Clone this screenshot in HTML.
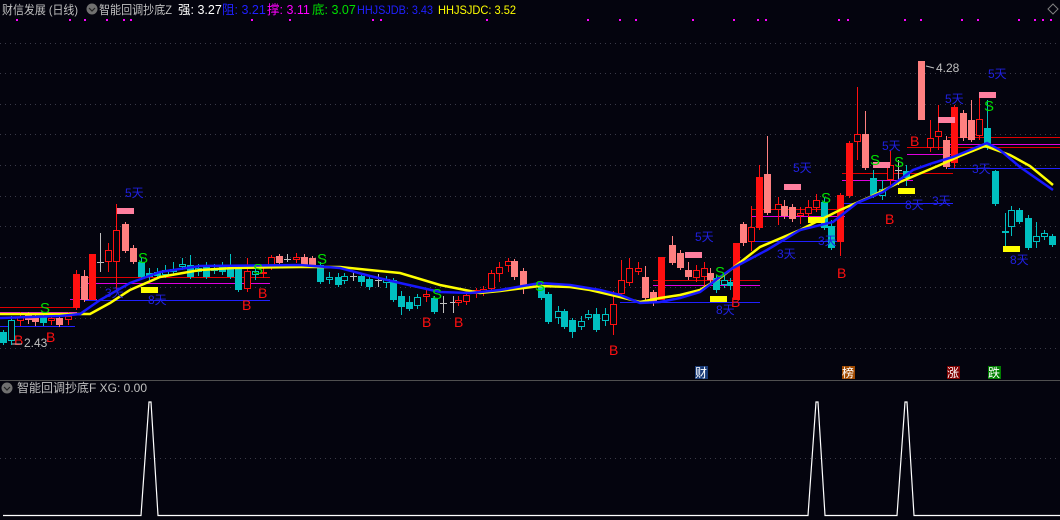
<!DOCTYPE html>
<html><head><meta charset="utf-8"><style>
html,body{margin:0;padding:0;background:#04040e;width:1060px;height:520px;overflow:hidden}
svg{display:block}
text{font-family:"Liberation Sans","Noto Sans CJK SC",sans-serif}
</style></head><body>
<svg id="s" width="1060" height="520" xmlns="http://www.w3.org/2000/svg"></svg>
<script>
var o='';
function L(x1,y1,x2,y2,c,w,d){o+='<line x1="'+x1+'" y1="'+y1+'" x2="'+x2+'" y2="'+y2+'" stroke="'+c+'" stroke-width="'+(w||1)+'"'+(d?' stroke-dasharray="'+d+'"':'')+'/>';}
function R(x,y,w,h,c){o+='<rect x="'+x+'" y="'+y+'" width="'+w+'" height="'+h+'" fill="'+c+'"/>';}
function T(x,y,t,c,s,tl){o+='<text x="'+x+'" y="'+y+'" fill="'+c+'" font-size="'+(s||12)+'"'+(tl?' textLength="'+tl+'" lengthAdjust="spacingAndGlyphs"':'')+'>'+t+'</text>';}
[43,73,104,134,165,196,226,257,287,318,348].forEach(function(y){L(0,y+.5,1060,y+.5,'#3a3a48',1,'1 4');});
L(0,458.5,1060,458.5,'#3a3a48',1,'1 4');
var H=[[0,77,307,'#e00000'],[0,77,312,'#e000e0'],[0,75,326,'#2020ff'],[70,97,299,'#e000e0'],[85,270,277,'#e00000'],[85,270,283,'#e000e0'],[85,270,300,'#2020ff'],
[653,760,280,'#e00000'],[653,760,285,'#e000e0'],[620,760,302,'#2020ff'],[752,845,209,'#e00000'],[752,845,216,'#e000e0'],[752,840,241,'#2020ff'],
[842,953,173,'#e00000'],[842,913,180,'#e000e0'],[842,953,203,'#2020ff'],[907,1060,147,'#e00000'],[907,953,154,'#e000e0'],[948,1060,137,'#e00000'],[948,1060,144,'#e000e0'],[948,1060,168,'#2020ff']];
H.forEach(function(h){L(h[0],h[2]+.5,h[1],h[2]+.5,h[3]);});
var C=[[0,332,343,330,345,'c'],[8,320,341,316,345,'h'],[17,317,321,312,326,'r'],[25,314,320,312,324,'p'],[32,316,322,314,326,'p'],[40,316,323,314,326,'c'],[48,318,321,315,325,'r'],[56,318,325,316,327,'p'],[65,316,320,312,325,'r'],
[73,274,308,270,310,'R'],[81,276,300,270,302,'p'],[89,254,300,254,300,'R'],[97,262,263,233,272,'w'],[105,250,262,243,272,'r'],[113,230,262,204,290,'r'],[122,224,251,222,253,'p'],[130,248,262,245,264,'p'],[138,262,277,258,280,'c'],
[146,273,277,268,280,'c'],[154,272,276,268,279,'c'],[162,270,275,265,278,'h'],[170,269,272,262,276,'c'],[179,264,267,258,270,'h'],[187,265,277,255,279,'c'],[195,268,272,264,276,'h'],[203,265,277,262,279,'c'],[211,268,271,264,274,'h'],[219,266,272,262,275,'c'],[227,268,277,254,279,'c'],[235,268,290,265,292,'c'],
[244,271,289,258,292,'r'],[252,271,275,268,280,'h'],[260,272,274,266,278,'r'],[268,257,268,255,270,'r'],[276,256,263,254,265,'p'],[284,259,260,254,262,'w'],[293,257,260,253,263,'r'],[301,257,265,254,267,'p'],[309,258,265,256,268,'p'],[317,265,282,262,284,'c'],
[326,277,280,272,284,'h'],[335,277,285,273,287,'c'],[341,276,281,273,284,'h'],[350,276,278,272,281,'w'],[358,276,282,274,286,'c'],[366,279,287,276,290,'c'],[375,280,281,274,287,'w'],[383,279,283,276,288,'h'],[390,280,300,278,302,'c'],[398,296,307,291,315,'c'],[406,302,309,296,311,'c'],[414,297,306,294,309,'h'],[423,294,297,290,302,'r'],[431,298,312,296,314,'c'],[440,303,304,296,313,'w'],[450,302,303,296,313,'w'],[455,300,303,296,306,'r'],[463,295,302,292,305,'r'],[473,290,294,288,298,'r'],[480,289,292,286,296,'r'],[488,273,289,270,292,'r'],[496,267,274,262,282,'r'],[505,261,266,258,272,'r'],[511,261,277,259,280,'p'],[520,271,287,268,294,'p'],
[538,287,298,284,300,'c'],[545,294,322,292,324,'c'],[555,311,318,306,324,'h'],[561,311,327,309,329,'c'],[569,320,332,318,338,'c'],[578,321,327,316,330,'h'],[585,314,318,310,320,'h'],[593,314,330,308,332,'c'],[602,314,321,308,326,'h'],[610,304,325,291,335,'r'],
[618,280,294,260,296,'r'],[626,268,283,258,286,'r'],[635,268,272,262,275,'r'],[642,277,298,266,300,'p'],[650,292,302,290,306,'p'],[658,257,300,257,300,'R'],[669,245,263,236,265,'p'],[677,253,268,250,270,'p'],[685,270,277,262,280,'p'],[693,270,278,265,282,'r'],[701,268,277,262,290,'r'],[707,273,280,268,283,'p'],[713,278,290,275,293,'c'],[721,280,285,276,288,'h'],[727,282,286,278,290,'c'],
[733,243,300,243,300,'R'],[740,224,243,222,246,'p'],[748,227,242,206,251,'r'],[756,177,228,165,230,'R'],[764,174,213,136,215,'p'],[775,204,210,197,225,'r'],[781,206,216,200,219,'p'],[789,207,219,204,222,'p'],[797,213,216,207,224,'r'],[805,207,214,200,218,'r'],[813,200,208,194,212,'r'],[821,202,228,198,230,'c'],[828,226,248,220,250,'c'],
[837,195,242,193,256,'R'],[846,143,196,141,198,'R'],[854,134,142,87,160,'r'],[862,134,168,111,170,'p'],[870,178,195,170,198,'c'],[879,189,196,180,200,'h'],[887,165,180,150,185,'r'],[895,170,172,160,185,'w'],[903,171,178,165,186,'c'],
[918,61,120,61,120,'p'],[927,138,148,120,152,'r'],[935,131,137,105,150,'r'],[943,140,167,136,169,'p'],[951,107,163,105,168,'R'],[960,113,138,110,141,'p'],[968,120,140,100,142,'p'],[976,119,136,98,140,'r'],[984,128,148,100,150,'c'],[992,171,204,170,206,'c'],
[1002,231,233,213,246,'h'],[1008,210,227,206,236,'h'],[1016,210,222,208,224,'c'],[1025,218,248,215,250,'c'],[1033,236,242,222,248,'h'],[1041,233,237,230,240,'h'],[1049,236,245,234,247,'c']];
C.forEach(function(c){var x=c[0],w=7,cx=x+3.5,t=c[5];
var col={R:'#ff1010',r:'#ff1010',p:'#ff8080',c:'#00c0c0',h:'#00c0c0',w:'#c0c0c0'}[t];
L(cx,c[3],cx,c[4],col);
if(t=='r'||t=='h'){o+='<rect x="'+(x+.5)+'" y="'+(c[1]+.5)+'" width="6" height="'+Math.max(1,c[2]-c[1]-1)+'" fill="#04040e" stroke="'+col+'"/>';}
else if(t=='w'){L(x,c[1]+.5,x+7,c[1]+.5,col);}
else R(x,c[1],w,Math.max(1,c[2]-c[1]),col);});
[[117,208],[784,184],[873,162],[938,117],[979,92],[685,252]].forEach(function(p){R(p[0],p[1],17,6,'#ff7f9f');});
[[141,287],[808,217],[898,188],[1003,246],[710,296]].forEach(function(p){R(p[0],p[1],17,6,'#ffff00');});
o+='<polyline fill="none" stroke="#ffff00" stroke-width="2.5" points="0,314 90,314 110,303 130,290 160,277 200,270 233,268 300,267 340,267 400,273 440,285 480,293 500,291 540,286 570,287 590,290 620,297 640,302 660,298 680,295 700,290 720,278 760,247 800,230 840,210 870,197 900,182 940,165 960,156 985,146 1010,155 1030,166 1053,185"/>';
o+='<polyline fill="none" stroke="#1818ff" stroke-width="2.5" points="0,318 60,316 80,314 100,300 130,283 160,272 200,266 300,265 340,268 370,276 400,283 440,292 470,293 500,290 540,283 570,285 600,290 620,295 640,303 660,302 680,298 700,292 720,277 733,268 767,250 800,230 833,222 857,203 883,192 913,170 933,163 953,157 987,143 1000,150 1020,167 1053,190"/>';
var D='#2020e0';
[[125,197,'5天'],[105,297,'3天'],[148,304,'8天'],[793,172,'5天'],[695,241,'5天'],[777,258,'3天'],[716,314,'8天'],[818,245,'3天'],[905,209,'8天'],[932,205,'3天'],[882,150,'5天'],[945,103,'5天'],[988,78,'5天'],[972,173,'3天'],[1010,264,'8天']].forEach(function(l){T(l[0],l[1],l[2],D,12);});
[[14,345],[46,342],[242,310],[258,298],[422,327],[454,327],[609,355],[731,307],[837,278],[885,224],[910,146]].forEach(function(b){T(b[0],b[1],'B','#ff1010',14);});
[[40,313],[138,263],[253,274],[317,264],[432,299],[535,291],[715,277],[821,203],[870,165],[894,167],[984,111]].forEach(function(s){T(s[0],s[1],'S','#00e000',15);});
T(24,347,'2.43','#c0c0c0',12);L(12,344,22,344,'#c0c0c0');
T(936,72,'4.28','#c0c0c0',12);L(926,66,934,68,'#c0c0c0');
T(2,14,'财信发展 (日线)','#c0c0c0',12,76);
o+='<circle cx="92" cy="9" r="5.5" fill="#707070"/><path d="M89 8 L92 11 L95 8" stroke="#222" fill="none" stroke-width="1.2"/>';
T(99,14,'智能回调抄底Z','#c0c0c0',12,73);
T(178,14,'强: 3.27','#ffffff',12.5);
T(222,14,'阻: 3.21','#2020ff',12.5);
T(267,14,'撑: 3.11','#ff00ff',12.5);
T(312,14,'底: 3.07','#00e000',12.5);
T(357,14,'HHJSJDB: 3.43','#2020ff',12,76);
T(438,14,'HHJSJDC: 3.52','#ffff00',12,78);
[17,70,85,107,124,131,252,290,373,381,487,588,620,636,693,734,758,766,839,848,905,921,962,978,1019,1035,1043,1051].forEach(function(x){R(x-1,19,2,2,'#ff00ff');});
o+='<path d="M1053 4 L1058 9 L1053 14 L1048 9 Z" fill="none" stroke="#808080"/>';
[[695,'财','#1a3c78'],[842,'榜','#a04a00'],[947,'涨','#800000'],[988,'跌','#008000']].forEach(function(g){R(g[0],366,13,13,g[2]);T(g[0],377,g[1],'#ffffff',12);});
L(0,380.5,1060,380.5,'#505050');
o+='<circle cx="7" cy="388" r="5.5" fill="#707070"/><path d="M4 387 L7 390 L10 387" stroke="#222" fill="none" stroke-width="1.2"/>';
T(17,392,'智能回调抄底F XG: 0.00','#c0c0c0',12);
o+='<polyline fill="none" stroke="#ffffff" stroke-width="1.2" points="3,515.5 141,515.5 149,402 151,402 158,515.5 808,515.5 816,402 818,402 825,515.5 897,515.5 905,402 907,402 914,515.5 1060,515.5"/>';
document.getElementById('s').innerHTML=o;
</script>
</body></html>
